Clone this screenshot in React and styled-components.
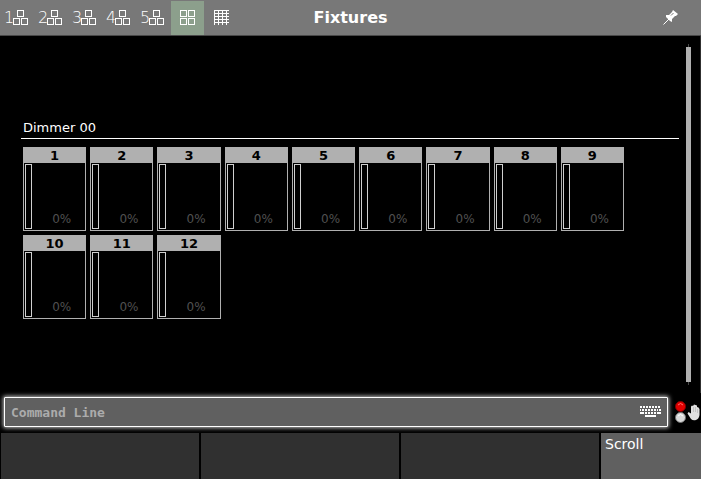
import React from 'react'
import styled, { createGlobalStyle } from 'styled-components'

const GlobalStyle = createGlobalStyle`
    * {
        box-sizing: border-box;
    }
    body {
        margin: 0;
        background-color: black;
        color: white;
        font-family: "DejaVu Sans", Verdana, sans-serif;
    }
    button, input {
        font: inherit;
        color: inherit;
        border: none;
        border-radius: 0;
        padding: 0;
        margin: 0;
    }
    svg {
        display: block;
        flex-shrink: 0;
    }
`

const Container = styled.div`
    display: flex;
    flex-direction: column;
    min-height: 100vh;
`;

const Header = styled.header`
    display: grid;
    grid-template-columns: 1fr auto 1fr;
    height: 36px;
    padding: 1px 1px 0px;
    background-color: #787878;
    border-bottom: 1px solid #484848;
`;

const Toolbar = styled.nav`
    display: flex;
    gap: 1px;
`;

const ToolButton = styled.button`
    display: flex;
    align-items: center;
    justify-content: center;
    width: 33px;
    padding-bottom: 1px;
    padding-right: ${props => props.$numbered ? "3px" : "0px"};
    background-color: ${props => props.$active ? "#8c9f8c" : "transparent"};
`;

const ToolNumber = styled.span`
    font-family: "DejaVu Sans Light", "DejaVu Sans", sans-serif;
    font-size: 16px;
    font-weight: 200;
    line-height: 17px;
    width: 9px;
`;

const Title = styled.h1`
    margin: 0;
    font-size: 16px;
    font-weight: 700;
    line-height: 34px;
`;

const PinButton = styled.button`
    justify-self: end;
    width: 59px;
    padding-bottom: 1px;
    display: flex;
    align-items: center;
    justify-content: center;
    background-color: transparent;
`;

const Main = styled.main`
    flex: 1;
    display: flex;
    padding: 8px 9px 8px 21px;
    border-right: 1px solid #303030;
`;

const Group = styled.section`
    flex: 1;
    padding-top: 76px;
`;

const GroupTitle = styled.h2`
    margin: 0px 0px 8px;
    padding: 0px 2px 2px;
    border-bottom: 1px solid white;
    font-size: 13px;
    font-weight: 400;
    line-height: 16px;
`;

const Tiles = styled.div`
    display: grid;
    grid-template-columns: repeat(9, 1fr);
    gap: 4px;
    padding: 0px 55px 0px 2px;
`;

const Tile = styled.button`
    display: flex;
    flex-direction: column;
    height: 84px;
    border: 1px solid #b0b0b0;
    background-color: black;
`;

const TileNumber = styled.span`
    width: 100%;
    background-color: #b0b0b0;
    color: black;
    font-size: 13px;
    font-weight: 700;
    line-height: 15px;
`;

const TileBody = styled.span`
    flex: 1;
    display: flex;
    align-items: flex-end;
    justify-content: space-between;
    width: 100%;
    padding: 1px 14px 1px 1px;
`;

const Level = styled.span`
    width: 7px;
    height: 100%;
    border: 1px solid #d0d0d0;
`;

const Percent = styled.span`
    color: #505050;
    font-size: 12px;
    line-height: 20px;
`;

const ScrollTrack = styled.div`
    display: flex;
    flex-direction: column;
    align-items: center;
    width: 5px;
    margin-left: 7px;
    padding: 3px 0px;
    background: linear-gradient(#484848, #484848) center / 1px 100% no-repeat;
`;

const ScrollThumb = styled.div`
    flex: 1;
    width: 5px;
    background-color: #b0b0b0;
`;

const CommandRow = styled.form`
    display: flex;
    align-items: center;
    height: 40px;
    padding: 4px 1px 6px 4px;
    gap: 7px;
`;

const CommandBox = styled.div`
    flex: 1;
    display: flex;
    align-items: center;
    height: 30px;
    padding: 0px 6px;
    background-color: #606060;
    border: 1px solid white;
    border-radius: 1px;
    box-shadow: 0px 0px 4px 1px #c0c0c0;
`;

const CommandInput = styled.input`
    flex: 1;
    min-width: 0;
    background-color: transparent;
    outline: none;
    font-family: "DejaVu Sans Mono", monospace;
    font-size: 13px;
    font-weight: 700;

    &::placeholder {
        color: #acacac;
        opacity: 1;
    }
`;

const IconButton = styled.button`
    background-color: transparent;
`;

const Footer = styled.footer`
    display: grid;
    grid-template-columns: repeat(3, 1fr) 100px;
    gap: 2px;
    height: 46px;
    padding-left: 1px;
`;

const FooterButton = styled.button`
    display: flex;
    align-items: flex-start;
    padding: 2px 4px;
    background-color: ${props => props.$light ? "#606060" : "#303030"};
    font-size: 14px;
    line-height: 18px;
`;

const BlocksIcon = () => (
    <svg width="15" height="15" viewBox="0 0 15 15" fill="none" stroke="white" shapeRendering="crispEdges">
        <rect x="4.5" y="0.5" width="6" height="6" />
        <rect x="0.5" y="8.5" width="6" height="6" />
        <rect x="8.5" y="8.5" width="6" height="6" />
    </svg>
)

const SquaresIcon = () => (
    <svg width="15" height="15" viewBox="0 0 15 15" fill="none" stroke="white" shapeRendering="crispEdges">
        <rect x="0.5" y="0.5" width="6" height="6" />
        <rect x="8.5" y="0.5" width="6" height="6" />
        <rect x="0.5" y="8.5" width="6" height="6" />
        <rect x="8.5" y="8.5" width="6" height="6" />
    </svg>
)

const SheetIcon = () => (
    <svg width="15" height="15" viewBox="0 0 15 15" fill="none" stroke="white" shapeRendering="crispEdges">
        <path d="M0 0.5H15M0 3.5H15M0 6.5H15M0 9.5H15M0 12.5H15M0.5 0V15M4.5 0V15M8.5 0V15M12.5 0V15" />
    </svg>
)

const PinIcon = () => (
    <svg width="15" height="15" viewBox="0 0 15 15" fill="white">
        <path d="M10 0L15 4L13 6H12L9 9V12L7 11L3 7V5H6L9 2Z" />
        <path d="M6 9L0.5 14.5" stroke="white" />
        <path d="M10.5 3L8 5.5" stroke="#787878" />
    </svg>
)

const KeyboardIcon = () => (
    <svg width="21" height="12" viewBox="0 0 21 12" stroke="white" shapeRendering="crispEdges">
        <path d="M0 1H21" strokeWidth="2" strokeDasharray="2 1" />
        <path d="M0 4H1M2 4H4M5 4H7M8 4H10M11 4H13M14 4H16M17 4H18M19 4H21" strokeWidth="2" />
        <path d="M0 7H4M5 7H7M8 7H10M11 7H13M14 7H16M17 7H21" strokeWidth="2" />
        <path d="M5 10H16" strokeWidth="2" />
    </svg>
)

const StatusIcon = () => (
    <svg width="25" height="22" viewBox="0 0 25 22">
        <circle cx="5.5" cy="5.5" r="5" fill="#e00000" stroke="#800000" />
        <path d="M3 4Q5.5 1 8 4" fill="none" stroke="#ff7070" />
        <circle cx="5.5" cy="16.5" r="5" fill="#d8d8d8" stroke="#707070" />
        <path d="M3 15Q5.5 12 8 15" fill="none" stroke="white" />
        <path d="M16 18L12.5 12.5L13.5 11L16 12.5V5.5L17 4.5L18 5L19 3.5L20.5 4L22 4.5V6L23.5 6.5L24.5 8V14Q24 18 21 19Q18 20 16 18Z" fill="#e0e0e0" />
        <path d="M18.5 6V11M20.5 6V11M22.5 8V12" stroke="#a8a8a8" strokeWidth="0.5" />
    </svg>
)

const fixtures = Array.from({ length: 12 }, (_, i) => ({ id: i + 1, level: 0 }))

const App = () => {
    return (
        <Container>
            <GlobalStyle />
            <Header>
                <Toolbar>
                    {[1, 2, 3, 4, 5].map(n =>
                    <ToolButton key={n} type="button" $numbered>
                        <ToolNumber>{n}</ToolNumber>
                        <BlocksIcon />
                    </ToolButton>)}
                    <ToolButton type="button" $active aria-label="Tiles"><SquaresIcon /></ToolButton>
                    <ToolButton type="button" aria-label="Sheet"><SheetIcon /></ToolButton>
                </Toolbar>
                <Title>Fixtures</Title>
                <PinButton type="button" aria-label="Pin"><PinIcon /></PinButton>
            </Header>
            <Main>
                <Group>
                    <GroupTitle>Dimmer 00</GroupTitle>
                    <Tiles>
                        {fixtures.map(fixture =>
                        <Tile key={fixture.id} type="button">
                            <TileNumber>{fixture.id}</TileNumber>
                            <TileBody>
                                <Level />
                                <Percent>{fixture.level}%</Percent>
                            </TileBody>
                        </Tile>)}
                    </Tiles>
                </Group>
                <ScrollTrack>
                    <ScrollThumb />
                </ScrollTrack>
            </Main>
            <CommandRow onSubmit={e => e.preventDefault()}>
                <CommandBox>
                    <CommandInput type="text" aria-label="Command Line" placeholder="Command Line" />
                    <IconButton type="button" aria-label="Keyboard"><KeyboardIcon /></IconButton>
                </CommandBox>
                <IconButton type="button" aria-label="Status"><StatusIcon /></IconButton>
            </CommandRow>
            <Footer>
                <FooterButton type="button" aria-label="Encoder 1" />
                <FooterButton type="button" aria-label="Encoder 2" />
                <FooterButton type="button" aria-label="Encoder 3" />
                <FooterButton type="button" $light>Scroll</FooterButton>
            </Footer>
        </Container>
    )
}

export default App
